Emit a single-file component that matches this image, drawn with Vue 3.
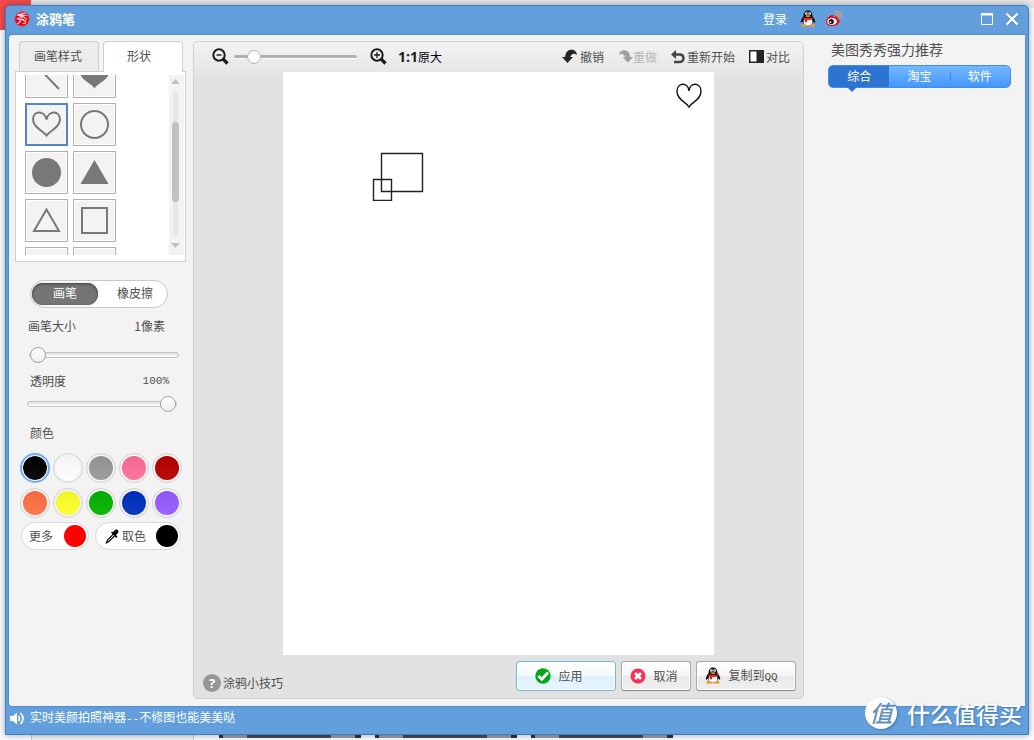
<script setup>
import { ref } from 'vue'

const shapes = [
  { id: 'line', name: '直线' },
  { id: 'heartFill', name: '实心爱心' },
  { id: 'heart', name: '爱心' },
  { id: 'circle', name: '圆形' },
  { id: 'circleFill', name: '实心圆' },
  { id: 'triangleFill', name: '实心三角形' },
  { id: 'triangle', name: '三角形' },
  { id: 'square', name: '方形' },
  { id: 'squareFill', name: '实心方形' },
  { id: 'arrow', name: '箭头' },
]
const colors = ['#000000', '#ffffff', '#999999', '#ff6e99', '#b80000', '#ff7043', '#ffff2b', '#03b300', '#0030bf', '#965cff']
const activeShape = ref('heart')
const activeColor = ref('#000000')
const zoom = ref(12)
const size = ref(0)
const alpha = ref(100)
</script>

<template>
  <div class="desktop">
    <div class="behind" aria-hidden="true">
      <i class="red"></i><i class="topbar"></i><i class="panel"></i>
      <i class="thumb t1"></i><i class="thumb t2"></i><i class="thumb t3"></i>
    </div>

    <svg class="defs" width="0" height="0" aria-hidden="true">
      <symbol id="qq" viewBox="0 0 16 17">
        <ellipse cx="4.6" cy="15.3" rx="3.3" ry="1.5" fill="#f7a21b" />
        <ellipse cx="11.4" cy="15.3" rx="3.3" ry="1.5" fill="#f7a21b" />
        <path d="M3.500 6.200C3.500 2.400 5.300.4 8 .4s4.500 2 4.500 5.800c1.500 1.600 2.900 4.200 2.700 6-.2 1-1.300.3-2-.6-.4 2.400-2.200 4-5.200 4s-4.800-1.600-5.200-4c-.7.900-1.800 1.600-2 .6-.2-1.800 1.200-4.400 2.700-6z" fill="#111" />
        <ellipse cx="8" cy="11.700" rx="4.400" ry="3.700" fill="#fff" />
        <ellipse cx="6.400" cy="3.600" rx="1.300" ry="1.600" fill="#fff" />
        <ellipse cx="9.600" cy="3.600" rx="1.300" ry="1.600" fill="#fff" />
        <circle cx="6.700" cy="3.800" r=".6" /><circle cx="9.300" cy="3.800" r=".6" />
        <path d="M5 6q3-1.300 6 0-3 2-6 0z" fill="#f7a21b" />
        <path d="M3.200 7.200q4.800 2.300 9.600 0l.3 1.700q-3 1.300-6 1v2.400H4.700v-3L3 8.700z" fill="#e91c1c" />
      </symbol>
    </svg>

    <main class="window">
      <header class="title">
        <svg class="logo" width="16" height="16" viewBox="0 0 16 16" aria-hidden="true">
          <circle cx="8" cy="8" r="7.300" fill="#f00018" stroke="#c4616e" />
          <text x="8" y="12" text-anchor="middle" font-size="11" fill="#fff">秀</text>
        </svg>
        <h1>涂鸦笔</h1>
        <a class="login" href="#">登录</a>
        <a class="social" href="#" aria-label="QQ"><svg width="16" height="17"><use href="#qq" /></svg></a>
        <a class="social weibo" href="#" aria-label="微博">
          <svg width="17" height="17" viewBox="0 0 17 17">
            <path d="M1 11.500C1 8.500 5.500 4.400 7.700 5c1.200.3.9 1.400.8 2 2.200-.9 4.800-.7 4.100 1.600 4.300 1.500 1.700 7.600-5.400 7.600-3.700 0-6.200-2-6.200-4.700z" fill="#e5121c" />
            <ellipse cx="7" cy="11.500" rx="4.800" ry="3.400" fill="#fff" />
            <circle cx="6.300" cy="11.600" r="2.600" fill="#111" /><circle cx="5.500" cy="12.200" r=".9" fill="#fff" />
            <path d="M10.500 4.200c2.300-.3 3.600 1 3.300 3.200M10.300 1.500c4-.6 6.500 2 5.900 6" fill="none" stroke="#f5a04a" stroke-width="1.400" />
          </svg>
        </a>
        <button class="win" aria-label="最大化">
          <svg width="14" height="14" viewBox="0 0 14 14"><path d="M1.500 1.500h11v11h-11z" fill="none" stroke="#fff" /><path d="M1 2.500h12" stroke="#fff" stroke-width="2" /></svg>
        </button>
        <button class="win close" aria-label="关闭">
          <svg width="14" height="14" viewBox="0 0 14 14"><path d="M2 2l10 10M12 2L2 12" stroke="#3f7cc2" stroke-width="4.200" opacity=".5" /><path d="M1.500 1.500l11 11M12.500 1.500l-11 11" stroke="#fff" stroke-width="2.400" /></svg>
        </button>
      </header>

      <div class="body">
        <aside class="left">
          <div class="tabs">
            <button>画笔样式</button>
            <button class="on">形状</button>
          </div>
          <div class="shapebox">
            <div class="clip">
              <div class="grid">
                <button v-for="s in shapes" :key="s.id" class="cell" :class="{ on: s.id === activeShape }" :aria-label="s.name" @click="activeShape = s.id">
                  <svg width="41" height="41" viewBox="0 0 41 41" fill="none" stroke="#787878" stroke-width="2">
                    <path v-if="s.id === 'line'" d="M6 5l27 28" />
                    <path v-else-if="s.id === 'heartFill'" d="M20.500 32.500C17.500 27 6 24.500 6 15.500 6 5 17.500 5 20.500 13 23.500 5 35 5 35 15.500 35 24.500 23.500 27 20.500 32.500z" fill="#787878" stroke="none" />
                    <path v-else-if="s.id === 'heart'" d="M20.500 31.500C17.500 27 7 23.500 7 15.500 7 6.500 18.500 6 20.500 15.500 22.500 6 34 6.500 34 15.500c0 8-10.500 11.500-13.500 16z" />
                    <circle v-else-if="s.id === 'circle'" cx="20.500" cy="20.500" r="13.500" />
                    <circle v-else-if="s.id === 'circleFill'" cx="20.500" cy="20.500" r="14.500" fill="#787878" stroke="none" />
                    <path v-else-if="s.id === 'triangleFill'" d="M20.500 8L34.500 32h-28z" fill="#787878" stroke="none" />
                    <path v-else-if="s.id === 'triangle'" d="M20.500 9.500L33 31H8z" />
                    <path v-else-if="s.id === 'square'" d="M8 8h25v25H8z" />
                    <path v-else-if="s.id === 'squareFill'" d="M8 8h25v25H8z" fill="#787878" />
                    <path v-else d="M7 33L33 9" />
                  </svg>
                </button>
              </div>
              <div class="scroll" aria-hidden="true">
                <svg width="9" height="5" viewBox="0 0 9 5"><path d="M0 5L4.500 0 9 5z" fill="#c1c1c1" /></svg>
                <div class="rail"><div class="bar"></div></div>
                <svg width="9" height="5" viewBox="0 0 9 5"><path d="M0 0h9L4.500 5z" fill="#c1c1c1" /></svg>
              </div>
            </div>
          </div>

          <div class="mode">
            <button class="on">画笔</button>
            <button class="eraser">橡皮擦</button>
          </div>

          <div class="row size"><label for="size">画笔大小</label><output for="size">1像素</output></div>
          <input id="size" v-model="size" class="range size-range" type="range" min="0" max="100" />
          <div class="row alpha"><label for="alpha">透明度</label><output for="alpha" class="lat">100%</output></div>
          <input id="alpha" v-model="alpha" class="range alpha-range" type="range" min="0" max="100" />

          <div class="row color">颜色</div>
          <div class="swatches">
            <input v-for="c in colors" :key="c" v-model="activeColor" type="radio" name="color" class="swatch" :value="c" :aria-label="c" :style="{ '--c': c }" />
          </div>
          <div class="picks">
            <button class="pick more">更多<i class="dot hot"></i></button>
            <button class="pick dropper">
              <svg width="14" height="15" viewBox="0 0 14 15">
                <path d="M8.300 5.200L2.500 11 1.500 13.700 4 12.500 9.800 6.700" fill="#fff" stroke="#000" stroke-width="1.200" />
                <path d="M6 3.500l5.500 5.500 1-1-1.500-2 2-2c1.500-2-1-4.300-3-3L8 3.200 7 2.500z" fill="#000" />
              </svg>
              <span>取色</span><i class="dot"></i>
            </button>
          </div>
        </aside>

        <section class="stage">
          <div class="tools">
            <button class="ic" aria-label="缩小">
              <svg width="17" height="17" viewBox="0 0 17 17" fill="none" stroke="#1c1c1c"><circle cx="7" cy="7" r="5.700" stroke-width="2" /><path d="M4.500 7h5" stroke-width="1.400" /><path d="M11 11l4.500 4.500" stroke-width="3.200" /></svg>
            </button>
            <input v-model="zoom" class="range zoom" type="range" min="0" max="100" aria-label="缩放" />
            <button class="ic plus" aria-label="放大">
              <svg width="17" height="17" viewBox="0 0 17 17" fill="none" stroke="#1c1c1c"><circle cx="7" cy="7" r="5.700" stroke-width="2" /><path d="M4 7h6M7 4v6" stroke-width="1.300" /><path d="M11 11l4.500 4.500" stroke-width="3.200" /></svg>
            </button>
            <button class="orig"><b>1:1</b>原大</button>
            <div class="acts">
              <button class="a">
                <svg width="16" height="15" viewBox="0 0 16 15"><path d="M0 8h3.200C3.500 3 6 .8 9.500.8c3 0 5.300 2 5.500 5.400C13.500 4.300 9.700 3.700 8.300 8H11l-5.500 6z" fill="#242424" /></svg>撤销
              </button>
              <button class="a redo" disabled>
                <svg width="15" height="15" viewBox="0 0 16 15"><path d="M16 8h-3.200C12.500 3 10 .8 6.500.8c-3 0-5.300 2-5.500 5.400C2.500 4.300 6.300 3.700 7.700 8H5l5.500 6z" fill="#a0a0a0" /></svg>重做
              </button>
              <button class="a">
                <svg width="14" height="14" viewBox="0 0 14 14"><path d="M4 4.500h5c4.600 0 4.600 7.500 0 7.500H3" fill="none" stroke="#444" stroke-width="2.400" /><path d="M0 4.500L5 0v9z" fill="#444" /></svg>重新开始
              </button>
              <button class="a">
                <svg width="15" height="13" viewBox="0 0 15 13"><path d="M0 0h15v13H0z" fill="#242424" /><path d="M1.500 1.500h6v10h-6z" fill="#fff" /></svg>对比
              </button>
            </div>
          </div>

          <div class="canvas">
            <svg class="boxes" width="52" height="50" viewBox="0 0 52 50" fill="none" stroke="#222" stroke-width="1.400"><path d="M9.500 2.500h41v38h-41zM1.500 28.500h18v21h-18z" /></svg>
            <svg class="love" width="28" height="28" viewBox="0 0 28 28" fill="none" stroke="#111" stroke-width="1.400"><path d="M14 26C11.500 21 2 19 2 10.500 2 1.500 13 .5 14 10 15 .5 26 1.500 26 10.500c0 8.500-9.500 10.500-12 15.500z" /></svg>
          </div>

          <div class="bottom">
            <button class="help">
              <svg width="18" height="18" viewBox="0 0 18 18"><circle cx="9" cy="9" r="9" fill="#969696" /><text x="9" y="14" text-anchor="middle" font-size="13" font-weight="700" font-family="Open Sans, sans-serif" fill="#fff">?</text></svg>涂鸦小技巧
            </button>
            <button class="btn apply">
              <svg width="16" height="16" viewBox="0 0 16 16"><circle cx="8" cy="8" r="7.700" fill="#08a51c" /><path d="M3.500 8l3.300 3.300L13 4.500" fill="none" stroke="#fff" stroke-width="2.800" /></svg>应用
            </button>
            <button class="btn cancel">
              <svg width="16" height="16" viewBox="0 0 16 16"><circle cx="8" cy="8" r="7.500" fill="#fa2f55" /><path d="M5 5l6 6M11 5l-6 6" stroke="#fff" stroke-width="2.800" /></svg>取消
            </button>
            <button class="btn copy">
              <svg width="16" height="17"><use href="#qq" /></svg><span>复制到<span class="lat">QQ</span></span>
            </button>
          </div>
        </section>

        <aside class="right">
          <h2>美图秀秀强力推荐</h2>
          <nav class="recs">
            <button class="on">综合</button><button>淘宝</button><button class="last">软件</button>
          </nav>
        </aside>
      </div>

      <footer class="foot">
        <svg width="15" height="13" viewBox="0 0 15 13" fill="none" stroke="#fff"><path d="M0 4h3l4-3.500v12L3 9H0z" fill="#fff" stroke="none" /><path d="M8.500 4q2 2.500 0 5M10.500 1q5 5.500 0 11" stroke-width="1.700" /></svg>
        <a href="#">实时美颜拍照神器<span class="lat">--</span>不修图也能美美哒</a>
      </footer>
    </main>

    <div class="mark"><span class="seal">值</span><span>什么值得买</span></div>
  </div>
</template>

<style>
html, body { margin: 0; background: #fafafa; }
</style>

<style scoped>
* { box-sizing: border-box; }
.desktop {
  position: relative; display: flex; min-height: 100vh; padding: 5px; overflow: hidden;
  font: 12px/16px "Noto Sans CJK SC", sans-serif; color: #505050;
}
button { font: inherit; color: inherit; background: none; border: 0; padding: 0; margin: 0; display: flex; align-items: center; justify-content: center; white-space: nowrap; }
a { color: inherit; text-decoration: none; }
svg { display: block; flex: none; }
.defs { position: absolute; }
.lat { font-family: "Liberation Mono", monospace; font-size: 11px; }

.behind { position: absolute; inset: 0; }
.behind i { position: absolute; display: block; }
.red { left: 0; top: 0; width: 31px; height: 30px; background: #f5494b; }
.topbar { left: 31px; right: 0; top: 0; height: 8px; background: #e5e5e5; }
.panel { left: 31px; bottom: 0; width: 163px; height: 5px; background: #f0f0f0; border: solid #ccc; border-width: 0 1px; }
.thumb { bottom: 2px; height: 3px; width: 142px; background: linear-gradient(90deg, #333 4px, #a09ca0 4px 28px, #4b4b4b 28px 112px, #a09ca0 112px 136px, #333 136px); }
.t1 { left: 219px; }
.t2 { left: 375px; }
.t3 { left: 531px; }

.window {
  position: relative; flex: 1; display: flex; flex-direction: column; background: #629fdc;
  border: 1px solid #397fd1; border-radius: 5px 5px 0 0; box-shadow: 0 0 6px rgba(0, 0, 0, .35);
}
.title { display: flex; align-items: center; height: 29px; padding: 0 9px 4px 8px; color: #fff; }
.title h1 { flex: 1; margin: 0 0 0 6px; font-size: 13px; line-height: 20px; font-weight: 700; }
.login { margin-right: 13px; }
.weibo { margin-left: 9px; }
.win { margin-left: 138px; }
.close { margin-left: 11px; }

.body { flex: 1; display: flex; margin: 0 3px; background: #f3f3f3; border-radius: 3px 0 0 3px; box-shadow: 0 0 2px #2d6298; }
.left { width: 184px; flex: none; padding: 6px 0 0 6px; }
.tabs { display: flex; gap: 4px; padding-left: 4px; height: 30px; }
.tabs button { width: 80px; height: 30px; padding: 0 2px 2px 0; background: #ececec; border: 1px solid #d0d0d0; border-bottom: 0; border-radius: 4px 4px 0 0; }
.tabs .on { height: 31px; padding-right: 8px; background: #fff; position: relative; }
.shapebox { width: 171px; padding: 3px 1px 6px 9px; background: #fff; border: 1px solid #d0d0d0; }
.clip { height: 180px; display: flex; justify-content: space-between; overflow: hidden; }
.grid { display: grid; grid-template-columns: 43px 43px; grid-auto-rows: 43px; gap: 5px; margin-top: -20px; }
.cell { border: 1px solid #b0b0b0; background: #f3f3f3; box-shadow: inset 0 0 0 1px #fff; }
.cell.on { border-color: #5584cd; box-shadow: inset 0 0 0 1px #5584cd; }
.scroll { width: 15px; background: #f3f3f3; display: flex; flex-direction: column; align-items: center; padding: 4px 2px 7px 0; gap: 7px; }
.rail { flex: 1; width: 5px; border-radius: 3px; background: #e7e7e7; display: flex; justify-content: center; }
.bar { flex: none; width: 7px; height: 80px; margin-top: 31px; border-radius: 4px; background: #c1c1c1; }

.mode { display: flex; width: 138px; height: 28px; margin: 18px 0 10px 15px; padding: 2px 1px; border: 1px solid #c8c8c8; border-radius: 14px; background: #fff; }
.mode button { flex: 1; height: 22px; padding-bottom: 2px; border-radius: 11px; }
.mode .on { flex: none; width: 66px; color: #fff; background: #757575; box-shadow: inset 0 1px 3px #444, 0 0 1px #555; }
.mode .eraser { padding-left: 6px; }
.row { display: flex; justify-content: space-between; height: 16px; }
.size { padding: 0 28px 0 13px; }
.alpha { padding: 0 24px 0 15px; margin-top: 10px; }
.color { padding-left: 15px; margin-top: 13px; }

.range { appearance: none; display: block; height: 16px; margin: 0; background: none; }
.range::-webkit-slider-runnable-track { height: 6px; border: 1px solid #c5c5c5; border-radius: 3px; background: linear-gradient(#ddd, #fff); }
.range::-webkit-slider-thumb { appearance: none; width: 16px; height: 16px; margin-top: -6px; border: 1px solid #a2a2a2; border-radius: 50%; background: linear-gradient(#fff, #eee); }
.size-range { width: 150px; margin: 13px 0 0 14px; }
.alpha-range { width: 150px; margin: 7px 0 0 12px; }

.swatches { display: grid; grid-template-columns: repeat(5, 30px); gap: 5px 3px; margin: 12px 0 4px 5px; }
.swatch { appearance: none; width: 30px; height: 30px; margin: 0; border: 1px solid #d2d2d2; border-radius: 50%; padding: 2px; background: linear-gradient(rgba(0, 0, 0, .05), rgba(255, 255, 255, .05)) content-box, linear-gradient(var(--c), var(--c)) content-box, #f3f3f3; box-shadow: inset 0 0 0 1px #f3f3f3; }
.swatch:checked { border: 2px solid #73aef0; padding: 1px; }
.picks { display: flex; gap: 6px; padding-left: 6px; }
.pick { width: 68px; height: 28px; padding: 0 2px 0 7px; border: 1px solid #dadada; border-radius: 14px; background: #fff; }
.dropper { width: 86px; padding-left: 9px; gap: 3px; }
.dot { width: 22px; height: 22px; margin-left: auto; border-radius: 50%; background: #000; }
.hot { background: #f00; }

.stage { flex: 1; min-width: 0; display: flex; flex-direction: column; margin: 6px 0 7px; border: 1px solid #d0d0d0; border-radius: 5px; background: linear-gradient(#f3f3f3, #e2e2e2 40px); }
.tools { display: flex; align-items: center; height: 30px; padding: 0 13px 1px 18px; }
.zoom { width: 123px; margin: 0 13px 0 5px; }
.zoom::-webkit-slider-runnable-track { height: 4px; border: 0; border-bottom: 1px solid #fff; border-radius: 2px; background: #b0b0b0; }
.zoom::-webkit-slider-thumb { width: 14px; height: 14px; margin-top: -5px; border-color: #b4b4b4; background: #fff; }
.orig { color: #000; margin-left: 11px; gap: 0; }
.orig b { font: 700 14px/16px "Open Sans", sans-serif; color: #1c1c1c; }
.acts { margin-left: auto; display: flex; gap: 14px; }
.a { gap: 2px; }
.redo { color: #b8b8b8; gap: 0; }
.canvas { position: relative; flex: 1; margin: 0 89px; background: #fff; }
.boxes { position: absolute; left: 89px; top: 79px; }
.love { position: absolute; right: 11px; top: 9px; }
.bottom { display: flex; align-items: center; height: 43px; padding: 0 7px 2px 9px; gap: 5px; }
.help { margin-right: auto; padding-top: 14px; gap: 2px; }
.btn { width: 100px; height: 30px; gap: 7px; border: 1px solid #aaa; border-bottom-color: #888; border-radius: 3px; background: linear-gradient(#fff, #f6f6f6 50%, #e9e9e9 50%, #efefef); box-shadow: inset 0 0 0 1px #fff; }
.cancel { width: 70px; padding-right: 4px; }
.copy { padding-right: 9px; }
.apply { padding-right: 14px; border-color: #73b9dd; background: linear-gradient(#fff, #f2faff 50%, #ddf1fc 50%, #e6f6ff); }

.right { width: 221px; flex: none; padding: 4px 14px 0 24px; }
.right h2 { margin: 0 0 6px 3px; font-size: 14px; line-height: 20px; font-weight: 400; }
.recs { display: flex; height: 23px; border: 1px solid #3f8ee4; border-radius: 5px; background: linear-gradient(#74b9ff, #4496fb); color: #fff; }
.recs button { position: relative; flex: 1; padding-bottom: 2px; }
.recs .on { background: #2d73d0; border-radius: 4px 0 0 4px; }
.recs .on::after { content: ""; position: absolute; left: 18px; top: 21px; border: 5px solid transparent; border-top-color: #2d73d0; border-bottom: 0; }
.recs .last { background: linear-gradient(#3f88dd, #3f88dd) 0 50% / 1px 9px no-repeat; }

.foot { display: flex; align-items: center; height: 28px; padding: 0 4px 4px; gap: 5px; color: #fff; }
.mark { position: absolute; right: 12px; bottom: 11px; display: flex; align-items: center; gap: 10px; color: #fff; font-size: 23px; line-height: 32px; font-weight: 500; text-shadow: 1px 1px 2px #4678a8; }
.seal { width: 32px; height: 32px; border-radius: 50%; background: #fff; color: #6291be; text-align: center; font-size: 23px; line-height: 31px; text-shadow: none; font-style: italic; box-shadow: 1px 1px 2px #4678a8; }
</style>
